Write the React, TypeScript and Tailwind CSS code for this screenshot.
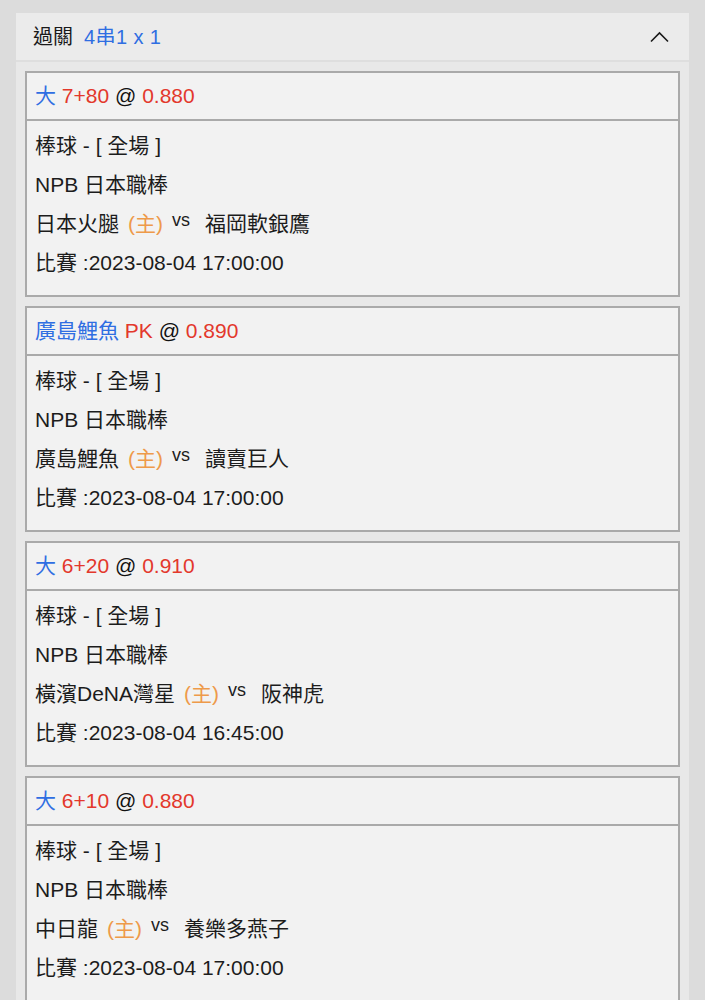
const font = { fontFamily: '"Liberation Sans", "Noto Sans CJK TC", sans-serif' }

type Bet = {
  pick: string
  line?: string
  odds: string
  home: string
  away: string
  time: string
}

const bets: Bet[] = [
  { pick: '大', line: '7+80', odds: '0.880', home: '日本火腿', away: '福岡軟銀鷹', time: '2023-08-04 17:00:00' },
  { pick: '廣島鯉魚', line: 'PK', odds: '0.890', home: '廣島鯉魚', away: '讀賣巨人', time: '2023-08-04 17:00:00' },
  { pick: '大', line: '6+20', odds: '0.910', home: '橫濱DeNA灣星', away: '阪神虎', time: '2023-08-04 16:45:00' },
  { pick: '大', line: '6+10', odds: '0.880', home: '中日龍', away: '養樂多燕子', time: '2023-08-04 17:00:00' },
]

function BetCard({ bet }: { bet: Bet }) {
  return (
    <div className="border-2 border-[#aaaaaa] bg-[#f2f2f2]">
      <div className="h-[48px] flex items-center px-2 border-b-2 border-[#aaaaaa] text-[21px] whitespace-pre">
        <span className="text-[#2f6ee2]">{bet.pick}</span>
        <span className="text-[#e3382c]"> {bet.line}</span>
        <span className="text-[#111]"> @ </span>
        <span className="text-[#e3382c]">{bet.odds}</span>
      </div>
      <div className="px-2 pt-[5px] pb-[13px] text-[21px] text-[#1c1c1c] leading-[39px]">
        <div>棒球 - [ 全場 ]</div>
        <div>NPB 日本職棒</div>
        <div className="flex items-center">
          <span>{bet.home}</span>
          <span className="ml-[9px] text-[#ee9a4a]">(主)</span>
          <span className="ml-[9px] text-[18px] leading-none relative -top-[4px]">vs</span>
          <span className="ml-[15px]">{bet.away}</span>
        </div>
        <div>比賽 :{bet.time}</div>
      </div>
    </div>
  )
}

export default function App() {
  return (
    <div className="min-h-screen bg-[#dcdcdc] pt-[13px] pl-4 pr-4" style={font}>
      <div className="bg-[#e8e8e8]">
        <div className="h-[49px] bg-[#ebebeb] border-b-2 border-[#dedede] flex items-center justify-between pl-[17px] pr-[20px]">
          <div className="flex items-center text-[20px] text-[#1a1a1a]">
            <span>過關</span>
            <span className="ml-[11px] text-[#2f6ee2] tracking-[0.4px]">4串1 x 1</span>
          </div>
          <svg width="19" height="12" viewBox="0 0 19 12" fill="none">
            <path d="M1 10.5 L9.5 2 L18 10.5" stroke="#1a1a1a" strokeWidth="1.6" />
          </svg>
        </div>
        <div className="px-[9px] pt-[9px] pb-[9px] flex flex-col gap-[9px]">
          {bets.map((b, i) => (
            <BetCard key={i} bet={b} />
          ))}
        </div>
      </div>
    </div>
  )
}
